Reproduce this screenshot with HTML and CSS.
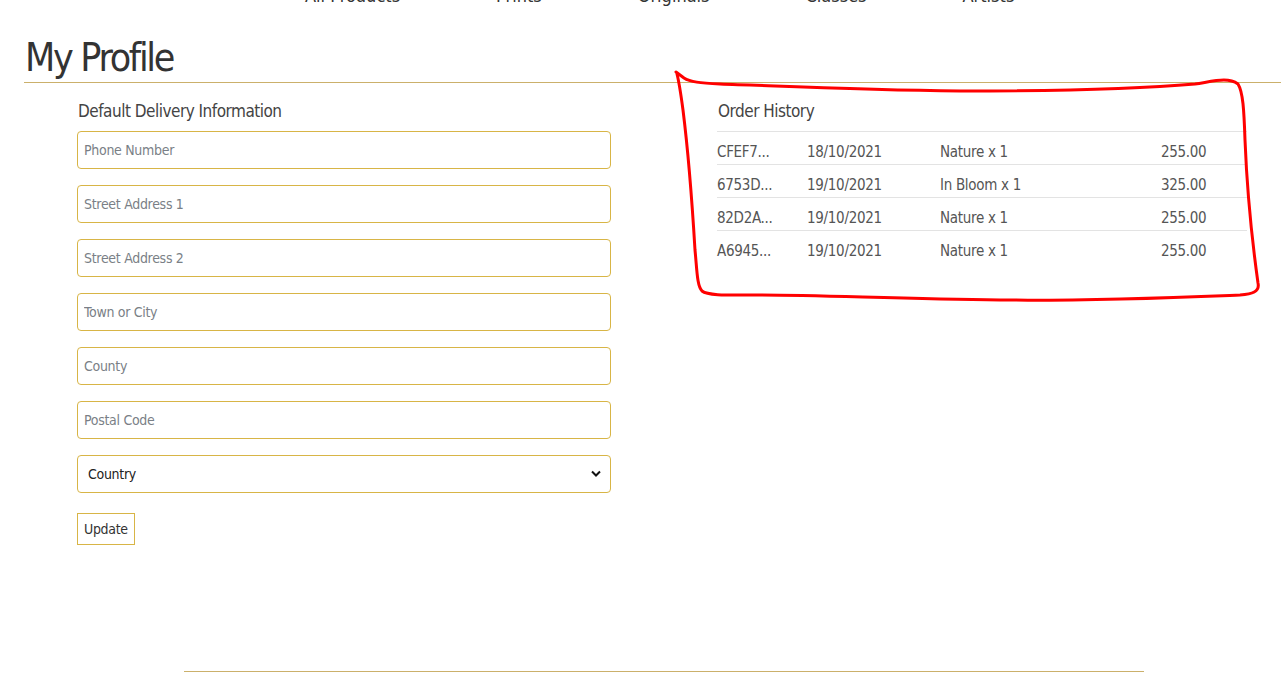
FILE: index.html
```html
<!DOCTYPE html>
<html lang="en">
<head>
<meta charset="utf-8">
<title>My Profile</title>
<link rel="stylesheet" href="styles.css">
</head>
<body>
<nav class="nav">
  <ul class="nav-list">
    <li class="nav-item">All Products</li>
    <li class="nav-item">Prints</li>
    <li class="nav-item">Originals</li>
    <li class="nav-item">Classes</li>
    <li class="nav-item">Artists</li>
  </ul>
</nav>
<main class="page">
  <div class="title-bar">
    <h1 class="title">My Profile</h1>
  </div>
  <div class="cols">
    <section class="col-form">
      <h2 class="section-title">Default Delivery Information</h2>
      <form class="form">
        <input class="field" type="text" placeholder="Phone Number">
        <input class="field" type="text" placeholder="Street Address 1">
        <input class="field" type="text" placeholder="Street Address 2">
        <input class="field" type="text" placeholder="Town or City">
        <input class="field" type="text" placeholder="County">
        <input class="field" type="text" placeholder="Postal Code">
        <div class="select-wrap">
          <select class="field select">
            <option>Country</option>
          </select>
          <svg class="chev" viewBox="0 0 10 8" width="10" height="8"><path d="M1 1.5 L5 5.5 L9 1.5" fill="none" stroke="#111" stroke-width="2"/></svg>
        </div>
        <div class="actions">
          <button class="btn" type="button">Update</button>
        </div>
      </form>
    </section>
    <section class="col-orders">
      <h2 class="section-title">Order History</h2>
      <table class="orders">
        <tbody>
          <tr><td class="c-id">CFEF7...</td><td class="c-date">18/10/2021</td><td class="c-items">Nature x 1</td><td class="c-total">255.00</td></tr>
          <tr><td class="c-id">6753D...</td><td class="c-date">19/10/2021</td><td class="c-items">In Bloom x 1</td><td class="c-total">325.00</td></tr>
          <tr><td class="c-id">82D2A...</td><td class="c-date">19/10/2021</td><td class="c-items">Nature x 1</td><td class="c-total">255.00</td></tr>
          <tr><td class="c-id">A6945...</td><td class="c-date">19/10/2021</td><td class="c-items">Nature x 1</td><td class="c-total">255.00</td></tr>
        </tbody>
      </table>
    </section>
  </div>
  <footer class="footer">
    <div class="foot-rule"></div>
  </footer>
</main>
<svg class="annotation" width="1281" height="694" viewBox="0 0 1281 694">
  <path d="M676 72 L684 78 C690 82 700 83 720 84 C780 86 860 90 960 91 C1060 91 1150 88 1195 84 C1215 81 1228 77 1238 84 C1243 92 1244 110 1245 140 C1247 190 1252 240 1258 283 C1260 292 1252 294 1240 295 C1190 297 1100 301 1000 300 C900 299 820 295 760 295 C730 295 708 296 702 291 C697 286 697 270 695 250 C692 200 688 150 683 110 C681 95 679 82 677 74" fill="none" stroke="#ff0000" stroke-width="3" stroke-linecap="round" stroke-linejoin="round"/>
</svg>
</body>
</html>
```
FILE: styles.css
```css
* { box-sizing: border-box; }

html, body {
  margin: 0;
  padding: 0;
  background: #ffffff;
}

body {
  font-family: "DejaVu Sans Condensed", "Liberation Sans", sans-serif;
  color: #333333;
  overflow: hidden;
  height: 694px;
  position: relative;
}

.nav {
  height: 6px;
  overflow: hidden;
}

.nav-list {
  list-style: none;
  margin: -16px 0 0 305px;
  padding: 0;
  display: flex;
  gap: 96px;
  font-size: 18px;
  line-height: 24px;
  color: #333;
}

.page {
  display: flex;
  flex-direction: column;
}

.title-bar {
  margin: 24px 0 0 24px;
  border-bottom: 1px solid #cbb06b;
  height: 53px;
}

.title {
  margin: 0;
  padding: 4px 0 0 1px;
  font-size: 39px;
  font-weight: 400;
  line-height: 48px;
  letter-spacing: -2.3px;
  color: #333;
}

.cols {
  display: grid;
  grid-template-columns: 534px 530px;
  column-gap: 106px;
  margin: 0 0 0 77px;
  padding-top: 17px;
}

.section-title {
  margin: 0 0 9px 1px;
  font-size: 17px;
  font-weight: 400;
  line-height: 22px;
  letter-spacing: -0.5px;
  color: #444;
}

.form {
  display: flex;
  flex-direction: column;
  gap: 16px;
}

.field {
  display: block;
  width: 534px;
  height: 38px;
  border: 1px solid #d8b546;
  border-radius: 4px;
  padding: 0 6px;
  font-family: inherit;
  font-size: 14px;
  letter-spacing: -0.3px;
  color: #333;
  background: #fff;
  outline: none;
}

.field::placeholder {
  color: #7a7f86;
}

.select-wrap {
  position: relative;
}

.select {
  appearance: none;
  -webkit-appearance: none;
  padding-left: 10px;
  color: #222;
}

.chev {
  position: absolute;
  right: 10px;
  top: 15px;
  pointer-events: none;
}

.actions {
  padding-top: 4px;
}

.btn {
  height: 32px;
  padding: 0 6px;
  border: 1px solid #d8b546;
  border-radius: 0;
  background: #fff;
  font-family: inherit;
  font-size: 14px;
  letter-spacing: -0.3px;
  color: #333;
}

.orders {
  width: 530px;
  border-collapse: collapse;
  font-size: 15px;
  letter-spacing: -0.3px;
  color: #555;
}

.orders td {
  border-top: 1px solid #e3e3e3;
  padding: 8px 0 0 0;
  line-height: 24px;
  vertical-align: top;
}

.c-id { width: 90px; }
.c-date { width: 133px; }
.c-items { width: 221px; }
.c-total { width: 86px; }

.footer {
  padding-top: 126px;
}

.foot-rule {
  margin-left: 184px;
  width: 960px;
  border-top: 1px solid #cbb06b;
}

.annotation {
  position: absolute;
  left: 0;
  top: 0;
  pointer-events: none;
}
```
